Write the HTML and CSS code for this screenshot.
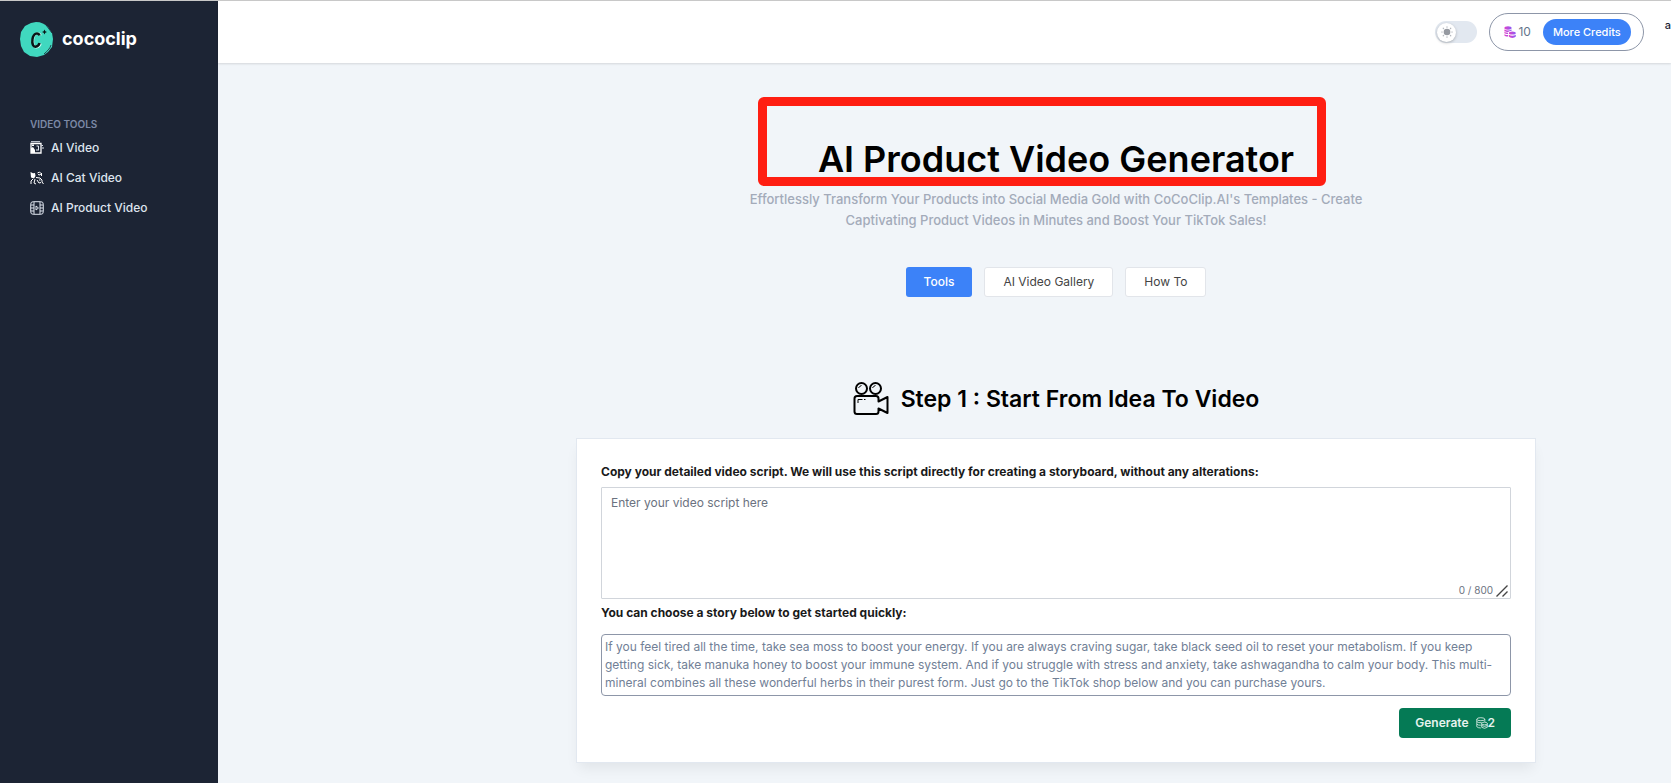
FILE: index.html
```html
<!DOCTYPE html>
<html lang="en">
<head>
<meta charset="utf-8">
<title>AI Product Video Generator - cococlip</title>
<link rel="stylesheet" href="styles.css">
</head>
<body>
<div class="app">
  <aside class="sidebar">
    <a class="brand" href="#">
      <svg class="brand-mark" viewBox="0 0 36 36" aria-hidden="true">
        <path d="M18 1c5 0 9 2 12 5l2 3 2 3 1 6-1 8-4 5-4 3-7 2-7-1-6-4-3-6-1-7 1-7 4-6 6-3z" fill="#40d8bf"/>
        <path d="M28 4l6 8M33 24c-1 4-4 6-7 9" fill="none" stroke="#1c2434" stroke-width=".8"/>
        <path d="M22.500 14.500c-.6-3.200-6.500-3-7.500 3.500-.8 5.500 1 8.500 3.500 8.200 2-.2 3.500-1.700 4-3.700" fill="none" stroke="#c9fff4" stroke-width="2.500"/>
        <path d="M21.500 14.500c-.6-3.200-6-3-7 3.500-.8 5.500 1 8 3 7.700 2-.2 3.500-1.700 4-3.700" fill="none" stroke="#0a1416" stroke-width="2.500"/>
        <path d="M26.500 8.500l.8 1.700 1.700.8-1.700.8-.8 1.700-.8-1.700-1.700-.8 1.700-.8z" fill="#0a1416"/>
      </svg>
      <span>cococlip</span>
    </a>
    <nav class="tools">
      <h2 class="tools-title">VIDEO TOOLS</h2>
      <a class="tool" href="#">
        <svg viewBox="0 0 14 14" aria-hidden="true"><path d="M1 2.500h10v9.500H1z" fill="none" stroke="#fff" stroke-width="1.300"/><path d="M1 7l2-1 2 3v3H1zM2 3.500h2v1.500H2z" fill="#fff"/><path d="M6.500 5h2v4M6 9h3M11.500 4.500h1.500M13 6v2M1 .7h9" fill="none" stroke="#dee4ee" stroke-width="1"/></svg>
        AI Video</a>
      <a class="tool" href="#">
        <svg viewBox="0 0 14 14" aria-hidden="true"><path d="M.5 1l2.500 1.200L5 2l.5 3L4 7.500 1 6.500z" fill="#fff"/><path d="M7.500 2l2-1 1.500 1.500L10 4 8 3.500M11.500 2v3M3 8l-2 2v3M5 8l-1 4 2 1M6 6.500l4 .5 2 2v2l1.500 2M7 9l2 3 2-.5M9 9h1.500" fill="none" stroke="#fff" stroke-width="1"/></svg>
        AI Cat Video</a>
      <a class="tool" href="#">
        <svg viewBox="0 0 14 14" fill="none" stroke="#dee4ee" stroke-width="1" aria-hidden="true"><rect x=".7" y=".7" width="12.600" height="12.600" rx="2.500"/><path d="M4 1v12M10 1v12M1 4h3M1 7h3M1 10h3M10 4h3M10 7h3M10 10h3M6 5l2.500 2L6 9z"/></svg>
        AI Product Video</a>
    </nav>
  </aside>

  <div class="page">
    <header class="topbar">
      <label class="theme">
        <input type="checkbox" aria-label="Dark mode">
        <span class="knob">
          <svg viewBox="0 0 16 16" aria-hidden="true"><circle cx="8" cy="8" r="3.800" fill="#969aa1"/><path d="M8 2v.5M8 13.500v.5M2 8h.5M13.500 8h.5M3.700 3.700l.4.400M11.900 11.900l.4.400M3.700 12.300l.4-.4M11.900 4.100l.4-.4" stroke="#b4b8be" stroke-width="1.400" stroke-linecap="round"/></svg>
        </span>
      </label>
      <div class="credits">
        <span class="balance">
          <svg viewBox="0 0 12 12" aria-hidden="true"><defs><linearGradient id="coin" x1="0" x2="1"><stop offset="0" stop-color="#e040c8"/><stop offset="1" stop-color="#8b5cf6"/></linearGradient></defs><g fill="url(#coin)"><ellipse cx="4" cy="2" rx="3.600" ry="1.700"/><path d="M.4 3.600c2 1.200 5 1.200 7.200 0v1.200c-2 .2-3 .8-3.200 1.200-2 0-3-.2-4-.8zM.4 6c1 .6 2.200.8 3.600.8V8C2.500 8 1.200 7.700.4 7.200zM.4 8.300c1 .6 2.200.8 3.600.8v1.500c-2 0-3.600-.5-3.600-1z"/><ellipse cx="8.300" cy="7" rx="3.500" ry="1.600"/><path d="M4.800 8.800c2 1.200 5 1.200 7 0v1.800c-1.500 1.700-5.500 1.700-7 0z"/></g></svg>
          10
        </span>
        <button class="more" type="button">More Credits</button>
      </div>
      <span class="user">a</span>
    </header>

    <main class="content">
      <section class="hero">
        <h1>AI Product Video Generator</h1>
        <p>Effortlessly Transform Your Products into Social Media Gold with CoCoClip.AI's Templates - Create Captivating Product Videos in Minutes and Boost Your TikTok Sales!</p>
        <div class="highlight"></div>
      </section>
      <div class="tabs">
        <button class="tab active" type="button">Tools</button>
        <button class="tab" type="button">AI Video Gallery</button>
        <button class="tab" type="button">How To</button>
      </div>
      <h2 class="step">
        <svg viewBox="0 0 36 36" fill="none" stroke="#000" stroke-width="2" stroke-linejoin="round" aria-hidden="true"><circle cx="8.500" cy="7.500" r="5.500"/><circle cx="22.500" cy="7.500" r="5.500"/><path d="M4 15h19q2.500 0 2.500 2.500v3l9-4.500v16l-9-4.500v3q0 2.500-2.500 2.500H4q-2.500 0-2.500-2.500v-13Q1.500 15 4 15z"/><path d="M5 22v-3.500h4.500M11 18.500h1.500M5.500 7q1-2 3-2.500M19.500 7q1-2 3-2.500" stroke-width="1"/></svg>
        <span>Step 1 : Start From Idea To Video</span>
      </h2>
      <form class="card">
        <label class="caption" for="script">Copy your detailed video script. We will use this script directly for creating a storyboard, without any alterations:</label>
        <div class="script-box">
          <textarea id="script" placeholder="Enter your video script here"></textarea>
          <span class="count">0 / 800</span>
          <svg class="grip" viewBox="0 0 12 12" stroke="#444" stroke-width="1.400" aria-hidden="true"><path d="M.5 11.500l11-11M6.500 11.500l5-5"/></svg>
        </div>
        <p class="caption">You can choose a story below to get started quickly:</p>
        <button class="story" type="button">If you feel tired all the time, take sea moss to boost your energy. If you are always craving sugar, take black seed oil to reset your metabolism. If you keep getting sick, take manuka honey to boost your immune system. And if you struggle with stress and anxiety, take ashwagandha to calm your body. This multi-mineral combines all these wonderful herbs in their purest form. Just go to the TikTok shop below and you can purchase yours.</button>
        <button class="generate" type="button">Generate
          <span class="cost"><svg viewBox="0 0 12 12" fill="none" stroke="#e6f3ee" stroke-width=".8" aria-hidden="true"><ellipse cx="4.800" cy="2.200" rx="4" ry="1.500"/><path d="M.8 2.200v7.500q1 1.200 4 1.300M.8 4.700q1.500 1.300 5 1M.8 7.200q1.500 1.200 4 1M8.800 2.200v2.500"/><ellipse cx="8.500" cy="6.500" rx="2.800" ry="1.300"/><path d="M5.700 6.500v3.800q2.800 2 5.600 0V6.500M5.700 8.500q2.800 1.800 5.600 0"/></svg>2</span>
        </button>
      </form>
    </main>
  </div>
</div>
</body>
</html>
```
FILE: styles.css
```css
* { box-sizing: border-box; }
body {
  margin: 0;
  font-family: Inter, "Liberation Sans", sans-serif;
  font-size: 12px;
  line-height: 18px;
  color: #1c2434;
  background: #f1f5f9;
}
h1, h2, p { margin: 0; }
button { font: inherit; border: 0; padding: 0; cursor: pointer; }
a { color: inherit; text-decoration: none; }

.app {
  display: flex;
  min-height: 100vh;
  overflow: hidden;
  border-top: 1px solid #c8c8c8;
}

.sidebar {
  flex: none;
  width: 218px;
  padding: 20px 18px;
  background: #1c2434;
}
.brand {
  display: flex;
  align-items: center;
  gap: 8px;
  font-size: 18px;
  font-weight: 700;
  line-height: 36px;
  color: #fff;
}
.brand-mark { width: 36px; height: 36px; }
.tools { padding: 58px 12px 0; }
.tools-title {
  font-size: 10px;
  font-weight: 600;
  line-height: 18px;
  color: #7c89a6;
}
.tool {
  display: flex;
  align-items: center;
  gap: 7px;
  height: 30px;
  font-weight: 500;
  color: #dee4ee;
}
.tool svg { width: 14px; height: 14px; }

.page { flex: 1; min-width: 0; }
.topbar {
  display: flex;
  align-items: center;
  justify-content: flex-end;
  height: 62px;
  background: #fff;
  box-shadow: 0 1px 2px rgba(0, 0, 0, .12);
}
.theme {
  display: flex;
  align-items: center;
  width: 42px;
  height: 22px;
  padding: 2px;
  border-radius: 11px;
  background: #e2e8f0;
}
.theme input {
  position: absolute;
  opacity: 0;
}
.knob {
  display: grid;
  place-items: center;
  width: 19px;
  height: 19px;
  border-radius: 50%;
  background: #fff;
  box-shadow: 0 1px 3px rgba(0, 0, 0, .25);
}
.knob svg { width: 14px; height: 14px; }
.credits {
  display: flex;
  align-items: center;
  gap: 12px;
  height: 38px;
  margin-left: 12px;
  padding: 0 12px 0 14px;
  border: 1px solid #8d96a8;
  border-radius: 19px;
}
.balance {
  display: flex;
  align-items: center;
  gap: 2px;
  color: #64748b;
}
.balance svg { width: 12px; height: 12px; }
.more {
  height: 26px;
  padding: 0 10px;
  border-radius: 13px;
  font-size: 11px;
  font-weight: 500;
  color: #fff;
  background: #3c82f8;
}
.user {
  align-self: flex-start;
  margin-left: 21px;
  padding-top: 15px;
  font-size: 11px;
  font-weight: 500;
}

.content {
  display: flex;
  flex-direction: column;
  align-items: center;
  padding: 72px 24px 20px 247px;
}
.hero {
  position: relative;
  display: flex;
  flex-direction: column;
  align-items: center;
  text-align: center;
}
.hero h1 {
  font-size: 36px;
  font-weight: 600;
  line-height: 48px;
  color: #000;
}
.hero p {
  max-width: 640px;
  padding-top: 6px;
  font-size: 13px;
  font-weight: 500;
  line-height: 21px;
  color: #a3abb9;
}
.highlight {
  position: absolute;
  top: -38px;
  left: 50%;
  width: 568px;
  height: 89px;
  margin-left: -298px;
  border: 9px solid #ff1e12;
  border-radius: 6px;
}

.tabs { display: flex; gap: 12px; margin-top: 36px; }
.tab {
  height: 30px;
  padding: 0 18px;
  border: 1px solid #e2e5ea;
  border-radius: 3px;
  color: #444;
  background: #fff;
}
.tab.active {
  border: 0;
  font-weight: 500;
  color: #fff;
  background: #3c82f8;
}

.step {
  display: flex;
  align-items: center;
  gap: 12px;
  margin-top: 84px;
  font-size: 23px;
  font-weight: 600;
  line-height: 36px;
  color: #000;
}
.step svg { width: 36px; height: 36px; }

.card {
  display: flex;
  flex-direction: column;
  width: 100%;
  max-width: 960px;
  margin-top: 21px;
  padding: 24px;
  border: 1px solid #e2e8f0;
  background: #fff;
  box-shadow: 0 8px 13px -3px rgba(0, 0, 0, .07);
}
.caption { font-weight: 700; color: #1a1a1a; }
.script-box { position: relative; display: flex; margin: 6px 0 5px; }
.script-box textarea {
  width: 100%;
  height: 112px;
  padding: 6px 9px;
  border: 1px solid #d1d5db;
  border-radius: 1px;
  font: inherit;
  color: inherit;
  resize: none;
}
.script-box textarea::placeholder { color: #6b7280; }
.count {
  position: absolute;
  right: 18px;
  bottom: 0;
  font-size: 10px;
  color: #6b7280;
}
.grip { position: absolute; right: 3px; bottom: 2px; width: 12px; height: 12px; }
.story {
  margin-top: 12px;
  padding: 3px;
  border: 1px solid #8d96a8;
  border-radius: 4px;
  text-align: left;
  color: #718096;
  background: #fff;
}
.generate {
  display: flex;
  align-items: center;
  align-self: flex-end;
  gap: 7px;
  height: 30px;
  margin-top: 12px;
  padding: 0 16px;
  border-radius: 4px;
  font-weight: 600;
  color: #e6f3ee;
  background: #057a55;
}
.cost { display: flex; align-items: center; }
.cost svg { width: 12px; height: 12px; }
```
